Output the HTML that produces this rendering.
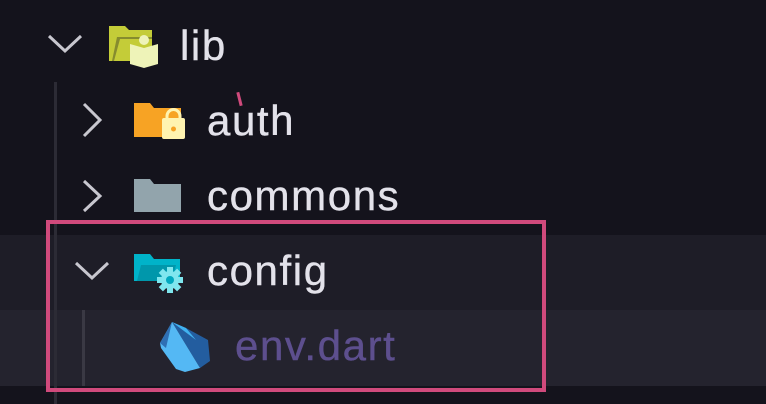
<!DOCTYPE html>
<html><head><meta charset="utf-8"><style>
html,body{margin:0;padding:0}
body{width:766px;height:404px;background:#14131c;position:relative;overflow:hidden;font-family:"Liberation Sans",sans-serif}
.t{position:absolute;font-size:42px;color:#e3e2ea;line-height:1;letter-spacing:1.6px;-webkit-text-stroke:0.4px currentColor}
svg{position:absolute;overflow:visible}
</style></head><body>
<div style="position:absolute;left:0;top:235px;width:766px;height:75px;background:#1e1d27"></div>
<div style="position:absolute;left:0;top:310px;width:766px;height:76px;background:#24232e"></div>
<div style="position:absolute;left:54px;top:82px;width:3px;height:322px;background:#2c2b35"></div>
<div style="position:absolute;left:82px;top:310px;width:3px;height:76px;background:#3a3944"></div>
<div style="position:absolute;left:46px;top:220px;width:492px;height:164px;border:4px solid #d04a7c"></div>

<svg style="left:0;top:0" width="766" height="404">
<g fill="none" stroke="#c8c7cf" stroke-width="3">
<polyline points="49,36 65,51 81,36"/>
<polyline points="84,104 100,120 84,136"/>
<polyline points="84,181 100,196 84,211"/>
<polyline points="76,263 92,278 108,263"/>
</g>
<path d="M109,26 h16 l4,4 h23 v31 h-43 z" fill="#c4cc38"/>
<path d="M112,61 l5,-24 h35 v24 z" fill="#14131c" opacity="0.35"/>
<path d="M114,61 l6,-22 h32 v22 z" fill="#c4cc38"/>
<path d="M130,44 l14,4 l14,-4 v20 l-14,4 l-14,-4 z" fill="#eef3b8"/>
<circle cx="144" cy="40" r="5" fill="#eef3b8"/>
<path d="M134,103 h16 l4,5 h27 v29 h-47 z" fill="#f7a324"/>
<rect x="162" y="118" width="23" height="21" rx="2" fill="#fff3b0"/>
<path d="M167,119 v-3 a6.5,6.5 0 0 1 13,0 v3" fill="none" stroke="#fff3b0" stroke-width="3"/>
<circle cx="173.5" cy="129" r="2.5" fill="#f7a324"/>
<path d="M134,179 h16 l4,5 h27 v28 h-47 z" fill="#92a4ac"/>
<path d="M134,254 h16 l4,5 h26 v22 h-46 z" fill="#00b3c9"/>
<path d="M137,281 l4,-16 h35 l-4,16 z" fill="#0097ab"/>
<g transform="translate(170,280)" fill="#7fe6ee">
<circle r="9"/>
<rect x="-3" y="-13" width="6" height="6"/>
<rect x="-3" y="7" width="6" height="6"/>
<rect x="-13" y="-3" width="6" height="6"/>
<rect x="7" y="-3" width="6" height="6"/>
<g transform="rotate(45)"><rect x="-3" y="-13" width="6" height="6"/><rect x="-3" y="7" width="6" height="6"/><rect x="-13" y="-3" width="6" height="6"/><rect x="7" y="-3" width="6" height="6"/></g>
<circle r="4" fill="#00a9bf"/>
</g>
<path d="M172,322 L186,328 L208,340 L210,361 L200,368 Z" fill="#235d9f"/>
<path d="M172,322 L200,368 L185,372 L176,369 L161,348 L160,343 Z" fill="#54b8f4"/>
<path d="M160,343 L172,322 L166,348 Z" fill="#2f6fb3"/>
<path d="M172,322 L186,328 L196,340 Z" fill="#40b2f0"/>
</svg>

<div class="t" style="left:180px;top:25px">lib</div>
<div class="t" style="left:207px;top:100px">auth</div>
<div style="position:absolute;left:238px;top:92px;width:3px;height:14px;background:#d04a7c;transform:rotate(-14deg)"></div>
<div class="t" style="left:207px;top:175px">commons</div>
<div class="t" style="left:207px;top:250px">config</div>
<div class="t" style="left:235px;top:325px;color:#5d4f8e">env.dart</div>
</body></html>
